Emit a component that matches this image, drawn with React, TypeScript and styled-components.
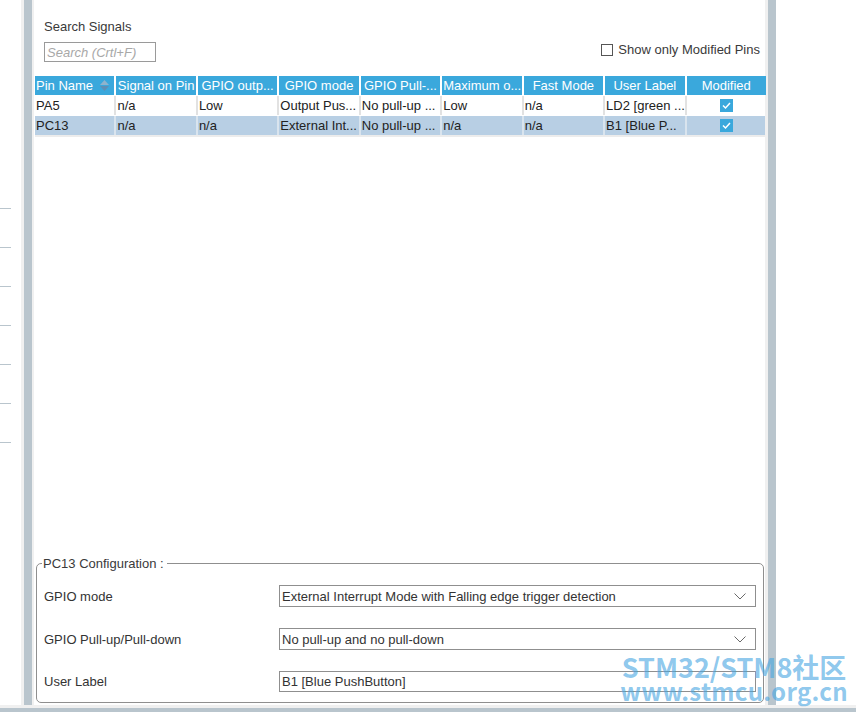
import React from "react";
import styled, { createGlobalStyle } from "styled-components";

const GlobalStyle = createGlobalStyle`
  html, body { margin: 0; padding: 0; background: #ffffff; }
  body { font-family: "Liberation Sans", Arial, sans-serif; font-size: 13px; color: #222; }
  * { box-sizing: border-box; }
`;

const Screen = styled.div`
  position: relative;
  width: 856px;
  height: 712px;
  display: flex;
  flex-direction: column;
  overflow: hidden;
`;

const Workspace = styled.div`
  flex: 1;
  display: flex;
  min-height: 0;
`;

const BottomEdge = styled.div`
  height: 7px;
  border-top: 3px solid #f0f0f0;
  background: #b9c5cd;
`;

const Ruler = styled.div`
  width: 21px;
  display: flex;
  flex-direction: column;
  gap: 38px;
  padding-top: 208px;
`;

const Tick = styled.div`
  width: 11px;
  height: 1px;
  background: #b9c5cd;
`;

const Splitter = styled.div<{ $left: number; $right: number }>`
  width: ${(p) => p.$left + p.$right + 8}px;
  border-left: ${(p) => p.$left}px solid #f0f0f0;
  border-right: ${(p) => p.$right}px solid #f0f0f0;
  background: #b9c5cd;
`;

const Panel = styled.div`
  width: 731px;
  background: #fff;
  display: flex;
  flex-direction: column;
  padding-bottom: 2px;
`;

const Blank = styled.div`
  flex: 1;
  background: #fff;
`;

const TopBar = styled.div`
  display: flex;
  justify-content: space-between;
  align-items: flex-end;
  padding: 19px 5px 0 10px;
`;

const SearchBlock = styled.div`
  display: flex;
  flex-direction: column;
  gap: 7px;
`;

const Caption = styled.div`
  color: #3a3a3a;
  font-size: 13px;
  line-height: 16px;
`;

const SearchInput = styled.input`
  width: 112px;
  height: 20px;
  border: 1px solid #9a9a9a;
  padding: 0 2px;
  font-family: "Liberation Sans", Arial, sans-serif;
  font-size: 13px;
  outline: none;
  &::placeholder {
    color: #a8a8a8;
    font-style: italic;
  }
`;

const CheckLabel = styled.label`
  display: flex;
  align-items: center;
  gap: 5px;
  color: #3a3a3a;
  font-size: 13px;
  margin-bottom: 5px;
`;

const Box = styled.span`
  width: 12px;
  height: 12px;
  border: 1px solid #555;
  background: #fff;
`;

const Table = styled.div`
  margin: 14px 0 0 1px;
  width: 731px;
  display: flex;
  flex-direction: column;
  gap: 1px;
  border-bottom: 2px solid #ececec;
`;

const Row = styled.div<{ $head?: boolean; $selected?: boolean }>`
  display: grid;
  grid-template-columns: repeat(9, 1fr);
  column-gap: 2px;
  height: 19px;
  background: ${(p) => (p.$head ? "#ffffff" : p.$selected ? "#d9e4ee" : "#e2e2e2")};
`;

const HeadCell = styled.div<{ $left?: boolean }>`
  position: relative;
  background: #3aa8dc;
  color: #fff;
  font-size: 13px;
  line-height: 19px;
  padding: 0 1px;
  text-align: ${(p) => (p.$left ? "left" : "center")};
  white-space: nowrap;
  overflow: hidden;
`;

const Cell = styled.div<{ $selected?: boolean; $center?: boolean }>`
  display: flex;
  align-items: center;
  justify-content: ${(p) => (p.$center ? "center" : "flex-start")};
  background: ${(p) => (p.$selected ? "#b8cfe4" : "#ffffff")};
  color: #222;
  font-size: 13px;
  padding: 0 1px;
  white-space: nowrap;
  overflow: hidden;
`;

const SortMark = styled.svg`
  position: absolute;
  right: 5px;
  top: 4px;
`;

const Spacer = styled.div`
  flex: 1;
`;

const Group = styled.fieldset`
  margin: 0 2px 0 2px;
  width: 727px;
  height: 147px;
  border: 1px solid #8f8f8f;
  border-radius: 5px;
  padding: 14px 7px 0 7px;
  display: flex;
  flex-direction: column;
  gap: 21px;
`;

const GroupTitle = styled.legend`
  color: #3a3a3a;
  font-size: 13px;
  padding: 0 3px 0 1px;
  margin-left: -2px;
`;

const FieldRow = styled.div`
  display: grid;
  grid-template-columns: 235px 477px;
  align-items: center;
`;

const FieldName = styled.div`
  color: #333;
  font-size: 13px;
`;

const SelectBox = styled.div`
  height: 22px;
  border: 1px solid #8f8f8f;
  display: flex;
  align-items: center;
  justify-content: space-between;
  padding: 0 9px 0 2px;
  color: #333;
  font-size: 13px;
`;

const TextBox = styled.div`
  height: 21px;
  border: 1px solid #8f8f8f;
  display: flex;
  align-items: center;
  padding: 0 2px;
  color: #333;
  font-size: 13px;
`;

const Watermark = styled.div`
  position: absolute;
  right: 8px;
  bottom: 11px;
  display: flex;
  flex-direction: column;
  align-items: center;
  color: rgba(70, 165, 225, 0.62);
  font-family: "Noto Sans CJK SC", "Noto Sans", sans-serif;
  font-weight: 700;
  pointer-events: none;
`;

const MarkTop = styled.div`
  font-size: 27px;
  line-height: 26px;
  letter-spacing: 0px;
`;

const MarkBottom = styled.div`
  font-size: 24px;
  line-height: 21px;
  letter-spacing: 0.3px;
`;

const Checked = () => (
  <svg width="13" height="13" viewBox="0 0 13 13">
    <rect width="13" height="13" fill="#3aa8dc" />
    <polyline points="3,6.5 5.5,9 10,4" fill="none" stroke="#fff" strokeWidth="1.5" />
  </svg>
);

const Chevron = () => (
  <svg width="12" height="7" viewBox="0 0 12 7">
    <polyline points="0.5,0.5 6,6 11.5,0.5" fill="none" stroke="#6a6a6a" strokeWidth="1" />
  </svg>
);

// Column titles as the grid shows them, already shortened to fit the narrow columns
const headers = [
  "Pin Name",
  "Signal on Pin",
  "GPIO outp...",
  "GPIO mode",
  "GPIO Pull-...",
  "Maximum o...",
  "Fast Mode",
  "User Label",
  "Modified",
];

type Pin = { cells: string[]; selected?: boolean };

const pins: Pin[] = [
  {
    cells: ["PA5", "n/a", "Low", "Output Pus...", "No pull-up ...", "Low", "n/a", "LD2 [green ..."],
  },
  {
    cells: ["PC13", "n/a", "n/a", "External Int...", "No pull-up ...", "n/a", "n/a", "B1 [Blue P..."],
    selected: true,
  },
];

export default function App() {
  return (
    <>
      <GlobalStyle />
      <Screen>
        <Workspace>
          <Ruler>
            {Array.from({ length: 7 }).map((_, i) => (
              <Tick key={i} />
            ))}
          </Ruler>
          <Splitter $left={3} $right={2} />
          <Panel>
            <TopBar>
              <SearchBlock>
                <Caption>Search Signals</Caption>
                <SearchInput placeholder="Search (Crtl+F)" />
              </SearchBlock>
              <CheckLabel>
                <Box />
                Show only Modified Pins
              </CheckLabel>
            </TopBar>
            <Table>
              <Row $head>
                {headers.map((h, i) => (
                  <HeadCell key={h} $left={i === 0}>
                    {h}
                    {i === 0 && (
                      <SortMark width="9" height="11" viewBox="0 0 9 11">
                        <polygon points="4.5,0 9,5 0,5" fill="#8fb3cc" />
                        <polygon points="0,6 9,6 4.5,11" fill="#5e8fb5" />
                      </SortMark>
                    )}
                  </HeadCell>
                ))}
              </Row>
              {pins.map((p) => (
                <Row key={p.cells[0]} $selected={p.selected}>
                  {p.cells.map((c, i) => (
                    <Cell key={i} $selected={p.selected}>
                      {c}
                    </Cell>
                  ))}
                  <Cell $selected={p.selected} $center>
                    <Checked />
                  </Cell>
                </Row>
              ))}
            </Table>
            <Spacer />
            <Group>
              <GroupTitle>PC13 Configuration :</GroupTitle>
              <FieldRow>
                <FieldName>GPIO mode</FieldName>
                <SelectBox>
                  External Interrupt Mode with Falling edge trigger detection
                  <Chevron />
                </SelectBox>
              </FieldRow>
              <FieldRow>
                <FieldName>GPIO Pull-up/Pull-down</FieldName>
                <SelectBox>
                  No pull-up and no pull-down
                  <Chevron />
                </SelectBox>
              </FieldRow>
              <FieldRow>
                <FieldName>User Label</FieldName>
                <TextBox>B1 [Blue PushButton]</TextBox>
              </FieldRow>
            </Group>
          </Panel>
          <Splitter $left={3} $right={0} />
          <Blank />
        </Workspace>
        <BottomEdge />
        <Watermark>
          <MarkTop>STM32/STM8社区</MarkTop>
          <MarkBottom>www.stmcu.org.cn</MarkBottom>
        </Watermark>
      </Screen>
    </>
  );
}
